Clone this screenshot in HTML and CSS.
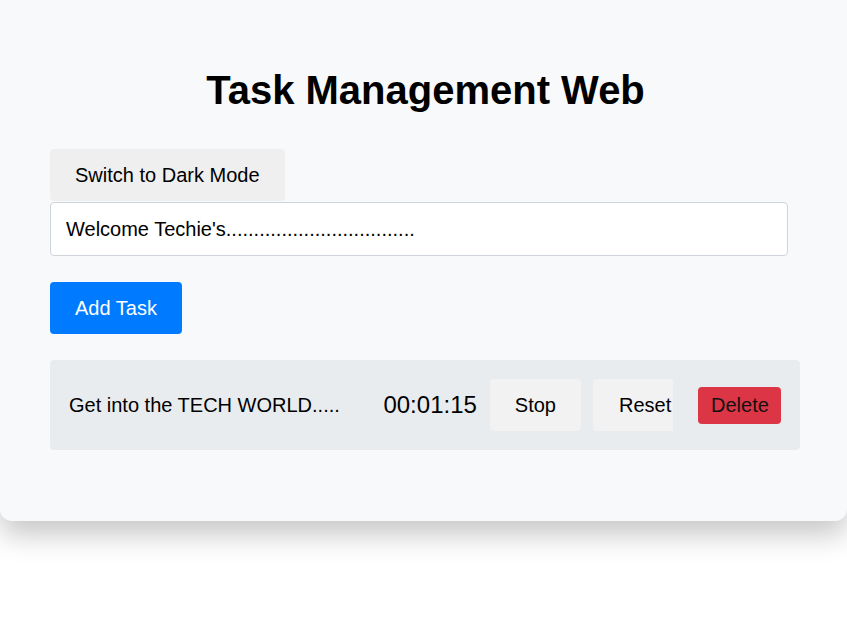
FILE: index.html
```html
<!DOCTYPE html>
<html>
<head>
<meta charset="utf-8">
<link rel="stylesheet" href="styles.css">
</head>
<body>
<div class="container">
  <h1 class="title">Task Management Web</h1>
  <button class="mode-btn">Switch to Dark Mode</button>
  <input class="task-input" type="text" value="Welcome Techie's..................................">
  <button class="add-btn">Add Task</button>
  <ul class="task-list">
    <li class="task-item">
      <span class="task-text">Get into the TECH WORLD.....</span>
      <span class="timer">00:01:15</span>
      <button class="ctrl-btn stop-btn">Stop</button>
      <div class="reset-clip"><button class="ctrl-btn reset-btn">Reset</button></div>
      <button class="delete-btn">Delete</button>
    </li>
  </ul>
</div>
</body>
</html>
```

FILE: styles.css
```css
* { box-sizing: border-box; }
html, body {
  margin: 0;
  padding: 0;
  background: #ffffff;
  font-family: "Liberation Sans", Arial, sans-serif;
}
body { min-height: 642px; }
.container {
  width: 847px;
  background: #f8f9fa;
  border-radius: 0 0 12px 12px;
  box-shadow: 0 14px 28px rgba(0, 0, 0, 0.22);
  padding: 67px 0 71px 50px;
  display: flex;
  flex-direction: column;
  align-items: flex-start;
}
.title {
  margin: 0 0 36px -48px;
  width: 847px;
  text-align: center;
  font-size: 40px;
  line-height: 46px;
  font-weight: bold;
  color: #000;
}
.mode-btn {
  font-family: inherit;
  font-size: 20px;
  line-height: 22px;
  padding: 15px 25px;
  border: none;
  border-radius: 4px;
  background: #efefef;
  color: #000;
  margin-bottom: 1px;
}
.task-input {
  width: 738px;
  height: 54px;
  font-family: inherit;
  font-size: 20px;
  padding: 0 15px;
  border: 1px solid #cfd4da;
  border-radius: 4px;
  background: #fff;
  color: #000;
  margin: 0 0 26px 0;
  outline: none;
}
.add-btn {
  font-family: inherit;
  font-size: 20px;
  line-height: 22px;
  padding: 15px 25px;
  border: none;
  border-radius: 4px;
  background: #007bff;
  color: #fff;
  margin-bottom: 26px;
}
.task-list {
  list-style: none;
  margin: 0;
  padding: 0;
}
.task-item {
  width: 750px;
  height: 90px;
  background: #e9ecef;
  border-radius: 4px;
  display: flex;
  align-items: center;
  padding: 0 19px;
}
.task-text {
  flex: 1;
  font-size: 20px;
  color: #000;
}
.timer {
  font-size: 24px;
  color: #000;
  margin-right: 13px;
}
.ctrl-btn {
  font-family: inherit;
  font-size: 20px;
  line-height: 22px;
  padding: 15px 25px;
  height: 52px;
  border: none;
  border-radius: 4px;
  background: #f2f2f2;
  color: #000;
}
.stop-btn { margin-right: 12px; }
.reset-clip {
  width: 80px;
  height: 52px;
  overflow: hidden;
  border-radius: 4px 0 0 4px;
  margin-right: 25px;
  flex-shrink: 0;
}
.reset-btn {
  padding: 15px 25px 15px 26px;
  white-space: nowrap;
  border-radius: 4px 0 0 4px;
}
.delete-btn {
  font-family: inherit;
  font-size: 20px;
  line-height: 23px;
  padding: 7px 13px;
  width: 83px;
  border: none;
  border-radius: 4px;
  background: #dc3545;
  color: #111;
}
```
